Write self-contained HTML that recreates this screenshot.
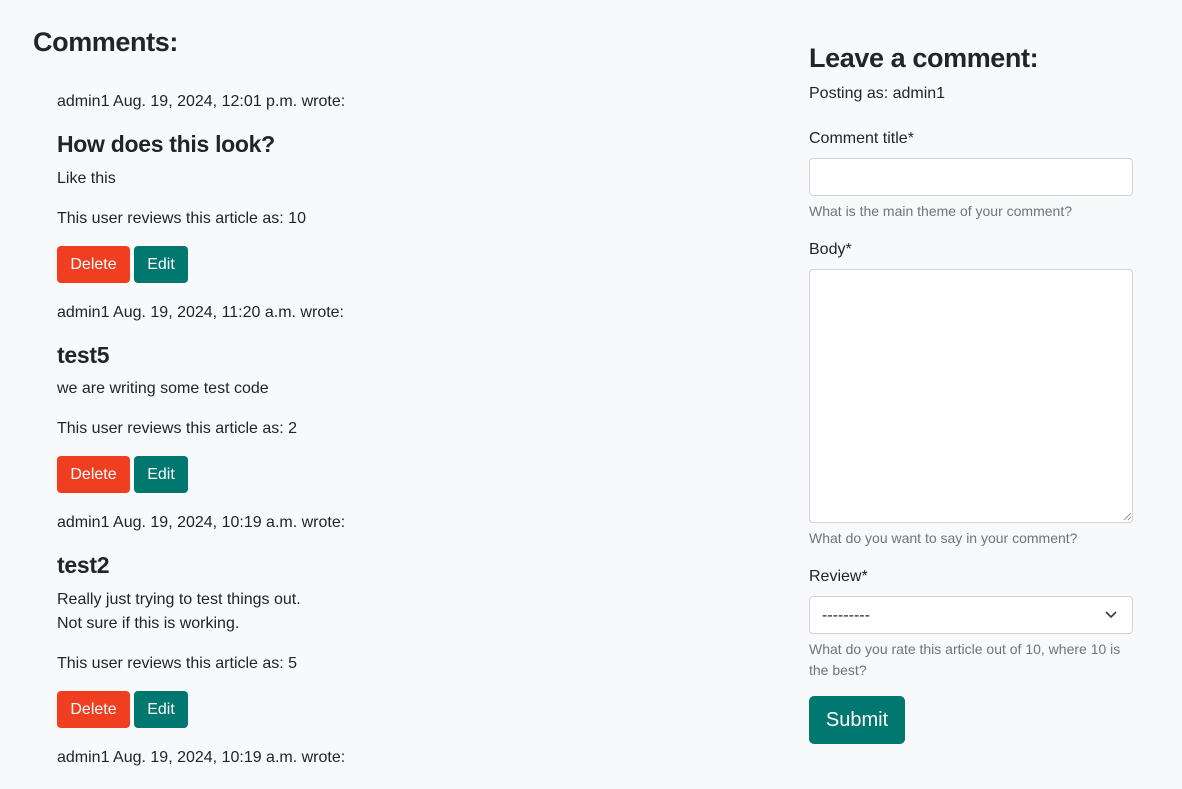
<!DOCTYPE html>
<html><head><meta charset="utf-8"><style>
body{margin:0;background:#f8f9fa;font-family:"Liberation Sans",sans-serif;color:#212529;width:1182px;height:789px;overflow:hidden;position:relative}
.a{position:absolute;white-space:nowrap}
.t{font-size:16px;line-height:20px}
.s{font-size:14px;line-height:20px;color:#6c757d}
.h4{font-size:23px;line-height:28px;font-weight:bold;letter-spacing:-0.3px}
.btn{position:absolute;height:37px;border-radius:4px;color:#fff;font-size:16px;line-height:37px;text-align:center}
.del{background:#f03f20;width:73px;left:57px}
.ed{background:#00776f;width:54px;left:134px}
.inp{position:absolute;left:809px;width:322px;background:#fff;border:1px solid #ced4da;border-radius:4px}
</style></head><body>
<div class="a" style="left:33px;top:25px;font-size:27px;line-height:34px;font-weight:bold;letter-spacing:-0.4px">Comments:</div>

<div class="a t" style="left:57px;top:92px">admin1 Aug. 19, 2024, 12:01 p.m. wrote:</div>
<div class="a h4" style="left:57px;top:130px">How does this look?</div>
<div class="a t" style="left:57px;top:169px">Like this</div>
<div class="a t" style="left:57px;top:209px">This user reviews this article as: 10</div>
<div class="btn del" style="top:246px">Delete</div><div class="btn ed" style="top:246px">Edit</div>

<div class="a t" style="left:57px;top:303px">admin1 Aug. 19, 2024, 11:20 a.m. wrote:</div>
<div class="a h4" style="left:57px;top:341px">test5</div>
<div class="a t" style="left:57px;top:379px">we are writing some test code</div>
<div class="a t" style="left:57px;top:419px">This user reviews this article as: 2</div>
<div class="btn del" style="top:456px">Delete</div><div class="btn ed" style="top:456px">Edit</div>

<div class="a t" style="left:57px;top:513px">admin1 Aug. 19, 2024, 10:19 a.m. wrote:</div>
<div class="a h4" style="left:57px;top:551px">test2</div>
<div class="a t" style="left:57px;top:590px">Really just trying to test things out.</div>
<div class="a t" style="left:57px;top:614px">Not sure if this is working.</div>
<div class="a t" style="left:57px;top:654px">This user reviews this article as: 5</div>
<div class="btn del" style="top:691px">Delete</div><div class="btn ed" style="top:691px">Edit</div>
<div class="a t" style="left:57px;top:748px">admin1 Aug. 19, 2024, 10:19 a.m. wrote:</div>

<div class="a" style="left:809px;top:41px;font-size:27px;line-height:34px;font-weight:bold;letter-spacing:-0.4px">Leave a comment:</div>
<div class="a t" style="left:809px;top:84px">Posting as: admin1</div>
<div class="a t" style="left:809px;top:129px">Comment title*</div>
<div class="inp" style="top:158px;height:36px"></div>
<div class="a s" style="left:809px;top:201px">What is the main theme of your comment?</div>
<div class="a t" style="left:809px;top:240px">Body*</div>
<div class="inp" style="top:269px;height:252px"></div>
<svg class="a" style="left:1122px;top:511px" width="10" height="10"><path d="M9 2L2 9M9 6L6 9" stroke="#999" stroke-width="1"/></svg>
<div class="a s" style="left:809px;top:528px">What do you want to say in your comment?</div>
<div class="a t" style="left:809px;top:567px">Review*</div>
<div class="inp" style="top:596px;height:36px"><span class="a t" style="left:12px;top:9px">---------</span>
<svg class="a" style="left:294px;top:13px" width="14" height="10"><path d="M2 2l5 5 5-5" fill="none" stroke="#343a40" stroke-width="1.6"/></svg></div>
<div class="a s" style="left:809px;top:639px">What do you rate this article out of 10, where 10 is</div>
<div class="a s" style="left:809px;top:660px">the best?</div>
<div class="btn" style="left:809px;top:696px;width:96px;height:48px;line-height:48px;font-size:20px;background:#00776f;border-radius:5px">Submit</div>
</body></html>
